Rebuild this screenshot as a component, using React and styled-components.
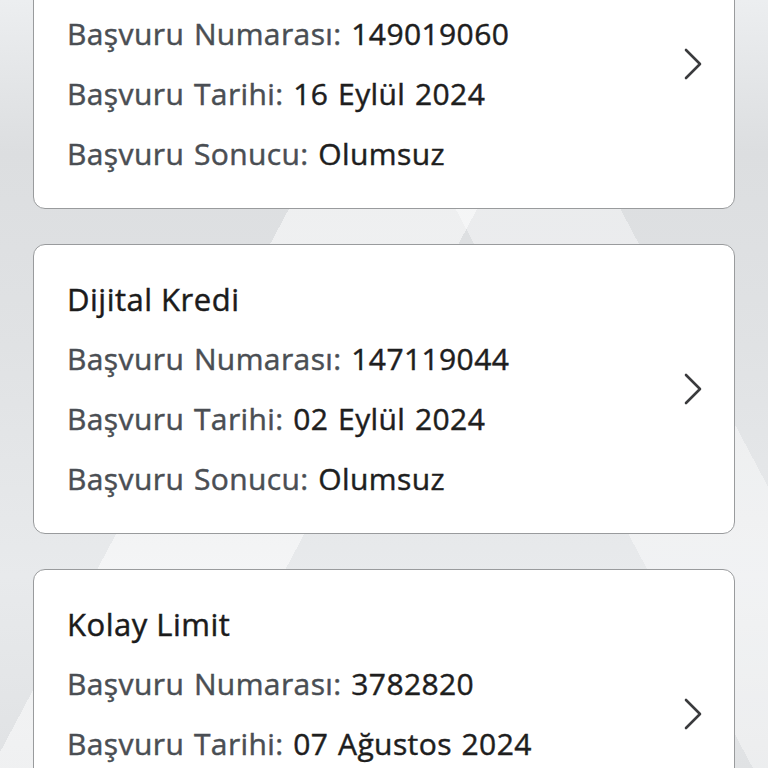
import React from "react";
import styled, { createGlobalStyle } from "styled-components";

const Global = createGlobalStyle`
  html, body {
    margin: 0;
    padding: 0;
    height: 100%;
    overflow: hidden;
  }
  body {
    font-family: "Open Sans", "Noto Sans", sans-serif;
    background: #e0e2e4;
  }
`;

const Page = styled.div`
  width: 768px;
  height: 768px;
  overflow: hidden;
  background:
    linear-gradient(118deg, rgba(255,255,255,0) 0 34%, rgba(255,255,255,0.5) 34% 50%, rgba(255,255,255,0) 50% 100%),
    linear-gradient(62deg, rgba(255,255,255,0) 0 64%, rgba(255,255,255,0.4) 64% 78%, rgba(255,255,255,0) 78%),
    linear-gradient(180deg, #eceef0 0%, #dcdee0 20%, #e0e2e4 45%, #e8eaec 75%, #e0e2e4 100%);
`;

const List = styled.div`
  display: flex;
  flex-direction: column;
  gap: 35px;
  padding: 0 33px;
  margin-top: -81px;
`;

const Card = styled.div`
  display: flex;
  align-items: center;
  height: 290px;
  box-sizing: border-box;
  background: #ffffff;
  border: 1.5px solid #999b9d;
  border-radius: 12px;
  padding: 25px 31px 25px 33px;
`;

const Body = styled.div`
  flex: 1;
  display: flex;
  flex-direction: column;
`;

const Title = styled.div`
  font-size: 31px;
  font-weight: 400;
  line-height: 60px;
  color: #1b1b1b;
  letter-spacing: 0.5px;
  -webkit-text-stroke: 0.45px #1b1b1b;
`;

const Row = styled.div`
  font-size: 30px;
  font-weight: 400;
  line-height: 60px;
  color: #4a4e53;
  white-space: nowrap;
  letter-spacing: 0.4px;
  word-spacing: 1.5px;
  -webkit-text-stroke: 0.45px #4a4e53;
`;

const Value = styled.span`
  color: #1e1e1e;
  -webkit-text-stroke: 0.45px #1e1e1e;
`;

const Chevron = styled.svg`
  width: 20px;
  height: 32px;
  flex: none;
`;

const items = [
  { title: "Bireysel Kredi", no: "149019060", date: "16 Eylül 2024", result: "Olumsuz" },
  { title: "Dijital Kredi", no: "147119044", date: "02 Eylül 2024", result: "Olumsuz" },
  { title: "Kolay Limit", no: "3782820", date: "07 Ağustos 2024", result: "Olumsuz" },
];

export default function App() {
  return (
    <>
      <Global />
      <Page>
        <List>
          {items.map((it) => (
            <Card key={it.no}>
              <Body>
                <Title>{it.title}</Title>
                <Row>
                  Başvuru Numarası: <Value>{it.no}</Value>
                </Row>
                <Row>
                  Başvuru Tarihi: <Value>{it.date}</Value>
                </Row>
                <Row>
                  Başvuru Sonucu: <Value>{it.result}</Value>
                </Row>
              </Body>
              <Chevron viewBox="0 0 20 32">
                <path d="M3 2 L17 16 L3 30" fill="none" stroke="#3a3b3d" strokeWidth="2.6" strokeLinecap="round" strokeLinejoin="round" />
              </Chevron>
            </Card>
          ))}
        </List>
      </Page>
    </>
  );
}
